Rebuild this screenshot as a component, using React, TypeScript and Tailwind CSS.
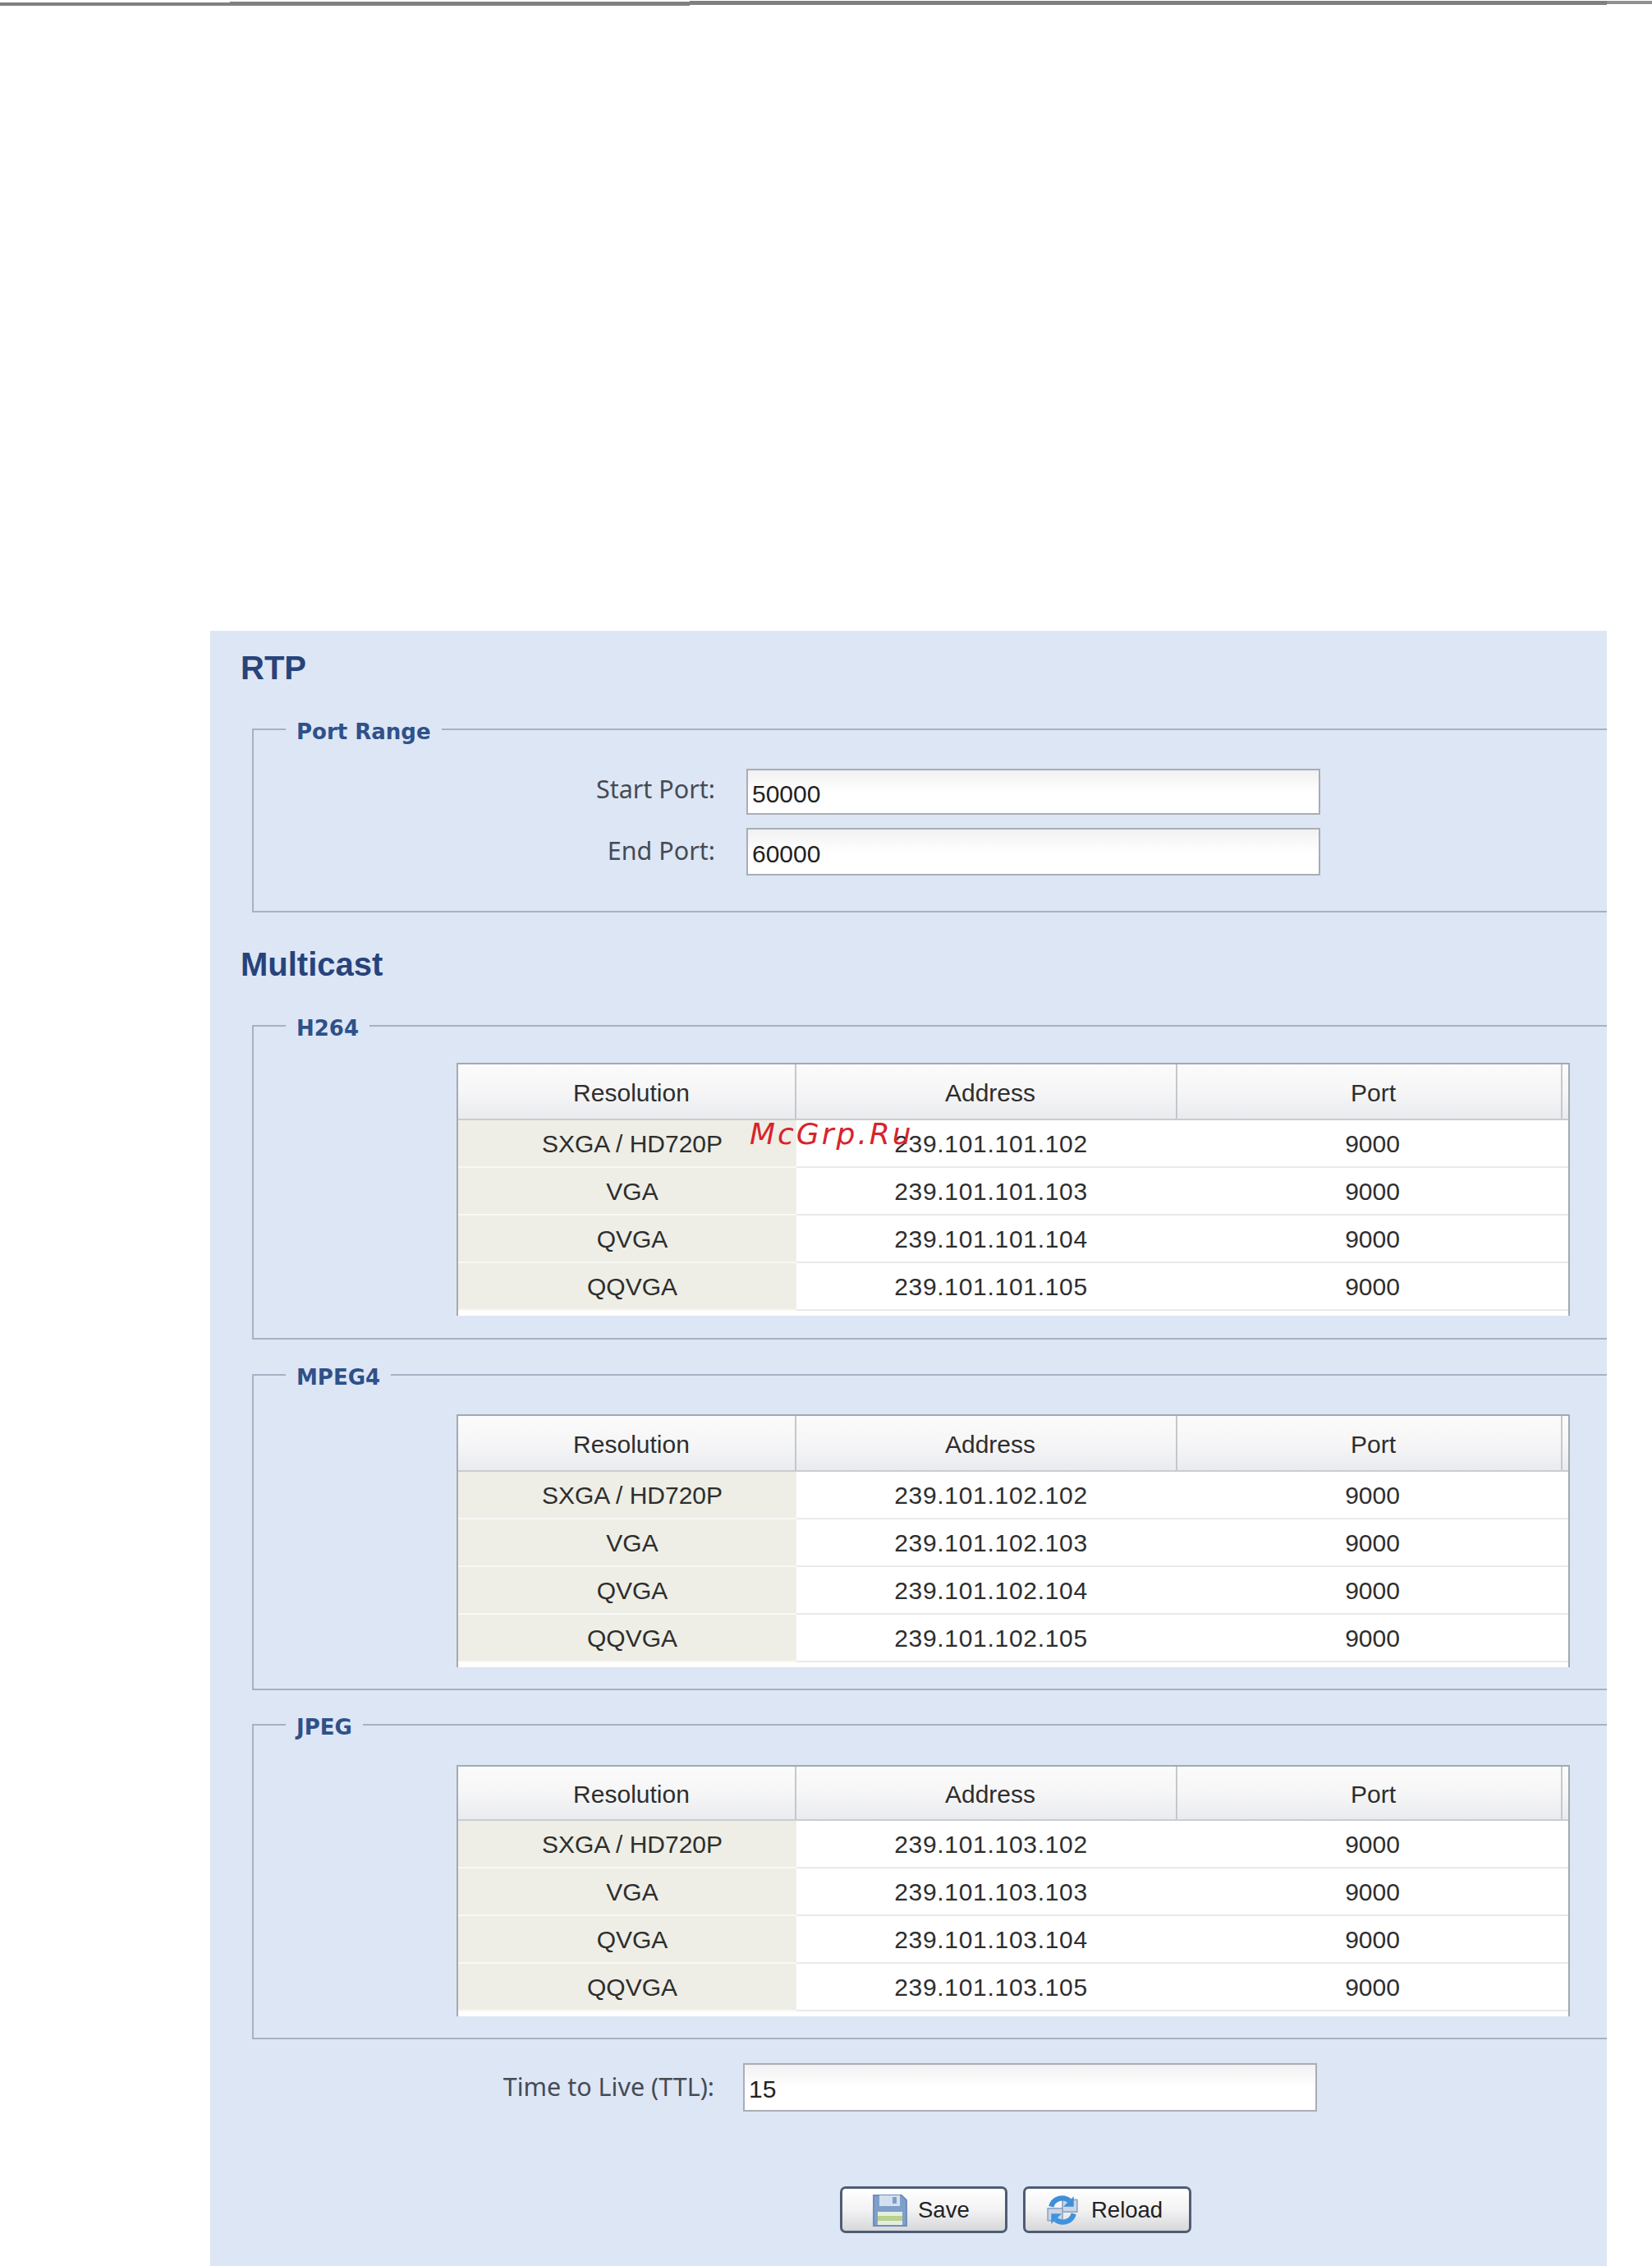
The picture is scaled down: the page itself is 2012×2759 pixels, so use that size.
import { ReactNode } from "react"

const resolutions = ["SXGA / HD720P", "VGA", "QVGA", "QQVGA"]

function Field({ label, value, boxClass, labelClass }: { label: string; value: string; boxClass: string; labelClass: string }) {
  return (
    <div className="flex items-center">
      <label className={`${labelClass} w-full whitespace-nowrap text-right text-[30.5px] leading-none text-[#454b55] font-['Noto_Sans',sans-serif]`}>{label}</label>
      <input
        readOnly
        defaultValue={value}
        className={`${boxClass} shrink-0 border-2 border-[#a9adb6] bg-linear-to-b from-[#f1f1f2] via-white to-white pl-[5px] pt-[5px] text-[30px] text-[#222] outline-none`}
      />
    </div>
  )
}

function Group({ title, className, children }: { title: string; className: string; children: ReactNode }) {
  return (
    <fieldset className={`ml-[51px] border-2 border-r-0 border-[#a7b1c5] ${className}`}>
      <legend className="ml-[39px] px-[13px] pt-[6px] text-[26px] leading-[34px] font-bold text-[#2f5189] font-['DejaVu_Sans',sans-serif]">{title}</legend>
      {children}
    </fieldset>
  )
}

function StreamTable({ subnet, headerClass }: { subnet: number; headerClass: string }) {
  return (
    <div className="ml-[247px] mr-[45px] border-2 border-b-0 border-[#a4a9b2] bg-white text-[30px] text-[#2e2e2e]">
      <div className={`${headerClass} grid grid-cols-[412px_464px_469px_1fr] border-b-2 border-[#c9ccd1] bg-linear-to-b from-[#fbfbfb] via-[#f6f6f7] to-[#e9ebee]`}>
        <div className="flex items-center justify-center border-r-2 border-[#c4c7cc] pl-[12px] pt-[3px]">Resolution</div>
        <div className="flex items-center justify-center border-r-2 border-[#c4c7cc] pl-[10px] pt-[3px]">Address</div>
        <div className="flex items-center justify-center border-r-2 border-[#c4c7cc] pl-[10px] pt-[3px]">Port</div>
        <div />
      </div>
      {resolutions.map((res, i) => (
        <div key={res} className="grid h-[58px] grid-cols-[412px_464px_469px_1fr]">
          <div className="flex items-center justify-center border-b-2 border-[#f8f8f5] bg-[#eeeee6] pl-[12px]">{res}</div>
          <div className="flex items-center justify-center border-b-2 border-[#e9e9e9] pl-[10px] tracking-[0.7px]">{`239.101.${subnet}.${102 + i}`}</div>
          <div className="flex items-center justify-center border-b-2 border-[#e9e9e9] pl-[6px]">9000</div>
          <div className="border-b-2 border-[#e9e9e9]" />
        </div>
      ))}
      <div className="h-[6px]" />
    </div>
  )
}

function SaveIcon() {
  return (
    <svg width="42" height="40" viewBox="0 0 42 40" className="shrink-0">
      <path d="M1 2h34l6 6v31H1z" fill="#7f9fca" stroke="#6f8fbc" strokeWidth="2" />
      <rect x="8" y="2" width="25" height="13" fill="#d5e0ee" />
      <rect x="24" y="4" width="5" height="8" fill="#7f9fca" />
      <rect x="6" y="22" width="30" height="16" fill="#e4eee0" />
      <rect x="6" y="27" width="30" height="6" fill="#b9d08f" />
    </svg>
  )
}

function ReloadIcon() {
  return (
    <svg width="40" height="40" viewBox="0 0 38 38" className="shrink-0">
      <rect x="19" y="7" width="17" height="14" fill="#c9d6e6" stroke="#8ba3bf" strokeWidth="1.5" />
      <rect x="2" y="17" width="17" height="14" fill="#c9d6e6" stroke="#8ba3bf" strokeWidth="1.5" />
      <path d="M6 15C8 6 19 2 27 8" fill="none" stroke="#3f8fd8" strokeWidth="6" />
      <path d="M32 3v12H20z" fill="#3f8fd8" />
      <path d="M32 23c-2 9-13 13-21 7" fill="none" stroke="#3f93de" strokeWidth="6" />
      <path d="M6 35V23h12z" fill="#3f93de" />
    </svg>
  )
}

function ActionButton({ className, children }: { className: string; children: ReactNode }) {
  return (
    <button className={`flex h-[57px] items-center rounded-[7px] border-[3px] border-[#4f5d73] bg-linear-to-b from-white via-[#f3f3f4] to-[#d6d7da] pt-[1px] text-[27.5px] text-[#222] ${className}`}>
      {children}
    </button>
  )
}

export default function App() {
  return (
    <div className="relative h-[2759px] w-[2012px] overflow-hidden bg-white font-['Liberation_Sans',sans-serif]">
      {/* scanned page rule, slightly skewed */}
      <div className="flex h-[8px]">
        <div className="mt-[3px] h-[4px] w-[280px] bg-[#808080]" />
        <div className="mt-[2px] h-[5px] w-[280px] bg-[#808080]" />
        <div className="mt-[2px] h-[5px] w-[280px] bg-[#808080]" />
        <div className="mt-[1px] h-[5px] w-[278px] bg-[#808080]" />
        <div className="mt-[1px] h-[5px] w-[280px] bg-[#808080]" />
        <div className="mt-[1px] h-[5px] w-[279px] bg-[#808080]" />
        <div className="mt-[1px] h-[5px] w-[280px] bg-[#808080]" />
        <div className="mt-[1px] h-[4px] w-[55px] bg-[#909090]" />
      </div>

      <div className="ml-[256px] mt-[760px] h-[1991px] w-[1701px] bg-[#dde6f5] pt-[25px]">
        <h2 className="mb-[35px] pl-[37px] text-[40px] leading-[40px] font-bold text-[#27437a]">RTP</h2>

        <Group title="Port Range" className="pb-[43px] pt-[28px]">
          <div className="flex w-[1299px] flex-col gap-[16px]">
            <Field label="Start Port:" value="50000" labelClass="pb-[7px]" boxClass="ml-[38px] h-[56px] w-[699px]" />
            <Field label="End Port:" value="60000" labelClass="pb-[3px]" boxClass="ml-[38px] h-[58px] w-[699px]" />
          </div>
        </Group>

        <h2 className="mb-[35px] mt-[43px] pl-[37px] text-[40px] leading-[40px] font-bold text-[#27437a]">Multicast</h2>

        <Group title="H264" className="pb-[27px] pt-[25px]">
          <StreamTable subnet={101} headerClass="h-[68px]" />
        </Group>
        <Group title="MPEG4" className="mt-[23px] pb-[26px] pt-[28px]">
          <StreamTable subnet={102} headerClass="h-[68px]" />
        </Group>
        <Group title="JPEG" className="mt-[22px] pb-[26px] pt-[29px]">
          <StreamTable subnet={103} headerClass="h-[66px]" />
        </Group>

        <div className="mt-[29px] w-[1348px]">
          <Field label="Time to Live (TTL):" value="15" labelClass="pb-[2px]" boxClass="ml-[35px] h-[59px] w-[699px]" />
        </div>

        <div className="ml-[767px] mt-[91px] flex gap-[19px]">
          <ActionButton className="w-[204px] gap-[13px] pl-[37px]">
            <SaveIcon />
            Save
          </ActionButton>
          <ActionButton className="w-[205px] gap-[15px] pl-[25px]">
            <ReloadIcon />
            Reload
          </ActionButton>
        </div>
      </div>

      {/* site watermark over the first table */}
      <div className="absolute left-[913px] top-[1359px] text-[36px] leading-[44px] tracking-[3px] text-[#d9232b] italic font-['DejaVu_Sans',sans-serif]">
        McGrp.Ru
      </div>
    </div>
  )
}
